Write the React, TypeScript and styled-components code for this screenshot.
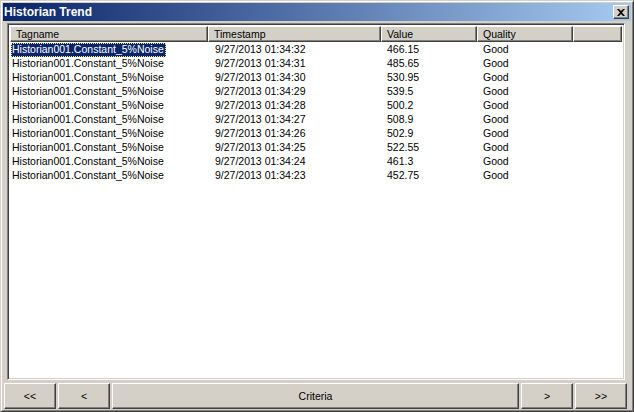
import React from "react";
import styled, { createGlobalStyle } from "styled-components";

const Global = createGlobalStyle`
  html, body { margin: 0; padding: 0; background: #d4d0c8; }
  body { font-family: "Liberation Sans", Arial, sans-serif; font-size: 10.5px; }
  * { box-sizing: border-box; }
`;

const Window = styled.div`
  width: 634px;
  height: 412px;
  background: #d4d0c8;
  border-top: 1px solid #d4d0c8;
  border-left: 1px solid #d4d0c8;
  border-right: 1px solid #404040;
  border-bottom: 1px solid #404040;
  box-shadow: inset 1px 1px 0 #ffffff, inset -1px -1px 0 #808080;
  padding: 2px;
  display: flex;
  flex-direction: column;
`;

const TitleBar = styled.div`
  height: 18px;
  background: linear-gradient(to right, #0a246a, #a6caf0);
  display: flex;
  align-items: center;
  justify-content: space-between;
  padding: 0 2px 0 1px;
`;

const Title = styled.span`
  color: #ffffff;
  font-weight: bold;
  font-size: 12px;
  font-family: "Liberation Sans", Arial, sans-serif;
`;

const CloseButton = styled.div`
  width: 16px;
  height: 14px;
  background: #d4d0c8;
  border-top: 1px solid #ffffff;
  border-left: 1px solid #ffffff;
  border-right: 1px solid #404040;
  border-bottom: 1px solid #404040;
  box-shadow: inset -1px -1px 0 #808080;
  display: flex;
  align-items: center;
  justify-content: center;
`;

const Body = styled.div`
  flex: 1;
  display: flex;
  flex-direction: column;
  padding: 2px 6px 0 4px;
  min-height: 0;
`;

const ListBox = styled.div`
  flex: 1;
  background: #ffffff;
  border-top: 1px solid #808080;
  border-left: 1px solid #808080;
  border-right: 1px solid #ffffff;
  border-bottom: 1px solid #ffffff;
  box-shadow: inset 1px 1px 0 #404040, inset -1px -1px 0 #d4d0c8;
  padding: 2px;
  display: flex;
  flex-direction: column;
  min-height: 0;
`;

const HeaderRow = styled.div`
  display: flex;
  height: 16px;
  background: #d4d0c8;
`;

const HeaderCell = styled.div<{ $w?: number }>`
  ${(p) => (p.$w ? `width: ${p.$w}px; flex: none;` : `flex: 1;`)}
  height: 16px;
  border-top: 1px solid #ffffff;
  border-left: 1px solid #ffffff;
  border-right: 1px solid #404040;
  border-bottom: 1px solid #404040;
  box-shadow: inset -1px -1px 0 #808080;
  padding: 0 0 0 5px;
  line-height: 14px;
  color: #000;
  white-space: nowrap;
  overflow: hidden;
`;

const Rows = styled.div`
  display: flex;
  flex-direction: column;
`;

const Row = styled.div`
  display: flex;
  height: 14px;
  line-height: 14px;
`;

const Cell = styled.div<{ $w: number; $pad: number }>`
  width: ${(p) => p.$w}px;
  flex: none;
  padding-left: ${(p) => p.$pad}px;
  white-space: nowrap;
  color: #000;
`;

const Selected = styled.span`
  display: inline-block;
  background: #0a246a;
  color: #ffffff;
  padding: 0 2px 0 1px;
  height: 14px;
  line-height: 13px;
  outline: 1px dotted #f0f070;
  outline-offset: -1px;
`;

const Plain = styled.span`
  padding-left: 1px;
`;

const ButtonBar = styled.div`
  display: flex;
  gap: 2px;
  height: 26px;
  margin: 3px -2px 0 -3px;
`;

const Btn = styled.div<{ $grow?: boolean }>`
  ${(p) => (p.$grow ? "flex: 1;" : "width: 52px; flex: none;")}
  height: 26px;
  background: #d4d0c8;
  border-top: 1px solid #ffffff;
  border-left: 1px solid #ffffff;
  border-right: 1px solid #404040;
  border-bottom: 1px solid #404040;
  box-shadow: inset -1px -1px 0 #808080;
  display: flex;
  align-items: center;
  justify-content: center;
  padding-bottom: 1px;
  color: #000;
  font-size: 10.5px;
`;

const cols = [198, 173, 96, 96];

const rows: [string, string, string][] = [
  ["9/27/2013 01:34:32", "466.15", "Good"],
  ["9/27/2013 01:34:31", "485.65", "Good"],
  ["9/27/2013 01:34:30", "530.95", "Good"],
  ["9/27/2013 01:34:29", "539.5", "Good"],
  ["9/27/2013 01:34:28", "500.2", "Good"],
  ["9/27/2013 01:34:27", "508.9", "Good"],
  ["9/27/2013 01:34:26", "502.9", "Good"],
  ["9/27/2013 01:34:25", "522.55", "Good"],
  ["9/27/2013 01:34:24", "461.3", "Good"],
  ["9/27/2013 01:34:23", "452.75", "Good"],
];

export default function App() {
  return (
    <>
      <Global />
      <Window>
        <TitleBar>
          <Title>Historian Trend</Title>
          <CloseButton>
            <svg width="8" height="7" viewBox="0 0 8 7">
              <path d="M0 0 L2 0 L4 2 L6 0 L8 0 L5 3.5 L8 7 L6 7 L4 5 L2 7 L0 7 L3 3.5 Z" fill="#000" />
            </svg>
          </CloseButton>
        </TitleBar>
        <Body>
          <ListBox>
            <HeaderRow>
              <HeaderCell $w={cols[0]}>Tagname</HeaderCell>
              <HeaderCell $w={cols[1]}>Timestamp</HeaderCell>
              <HeaderCell $w={cols[2]}>Value</HeaderCell>
              <HeaderCell $w={cols[3]}>Quality</HeaderCell>
              <HeaderCell />
            </HeaderRow>
            <Rows>
              {rows.map((r, i) => (
                <Row key={i}>
                  <Cell $w={cols[0]} $pad={1}>
                    {i === 0 ? (
                      <Selected>Historian001.Constant_5%Noise</Selected>
                    ) : (
                      <Plain>Historian001.Constant_5%Noise</Plain>
                    )}
                  </Cell>
                  <Cell $w={cols[1]} $pad={7}>{r[0]}</Cell>
                  <Cell $w={cols[2]} $pad={6}>{r[1]}</Cell>
                  <Cell $w={cols[3]} $pad={6}>{r[2]}</Cell>
                </Row>
              ))}
            </Rows>
          </ListBox>
          <ButtonBar>
            <Btn>&lt;&lt;</Btn>
            <Btn>&lt;</Btn>
            <Btn $grow>Criteria</Btn>
            <Btn>&gt;</Btn>
            <Btn>&gt;&gt;</Btn>
          </ButtonBar>
        </Body>
      </Window>
    </>
  );
}
